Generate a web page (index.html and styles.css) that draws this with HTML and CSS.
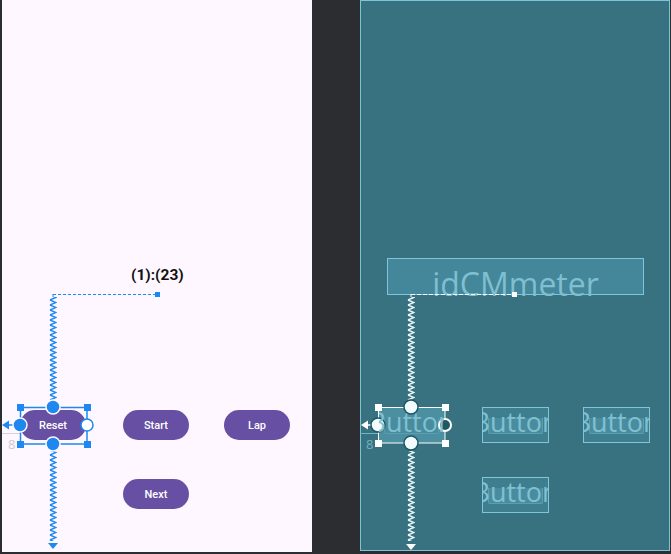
FILE: index.html
```html
<!DOCTYPE html>
<html lang="en">
    <head>
        <title>Layout Editor - Design and Blueprint</title>
        <link rel="stylesheet" href="styles.css">
    </head>
    <body>
        <div class="editor">
            <!-- design surface -->
            <div class="surface design">
                <div class="label">(1):(23)</div>
                <div class="btn reset">Reset</div>
                <div class="btn start">Start</div>
                <div class="btn lap">Lap</div>
                <div class="btn next">Next</div>
                <div class="margin-num">8</div>
                <svg class="overlay" width="310" height="552">
                    <defs>
                        <pattern id="zzBlue" x="47" y="0" width="8" height="5" patternUnits="userSpaceOnUse">
                            <path d="M1 0 L7 2.5 L1 5" stroke="#1e88f0" stroke-width="1.4" fill="none"/>
                        </pattern>
                    </defs>
                    <line x1="51" y1="294.5" x2="155" y2="294.5" stroke="#1e88f0" stroke-width="1.2" stroke-dasharray="3 2"/>
                    <line x1="51" y1="294" x2="51" y2="297" stroke="#1e88f0"/>
                    <rect x="153" y="292" width="5" height="5" fill="#1e88f0"/>
                    <rect x="47" y="297" width="8" height="104" fill="url(#zzBlue)"/>
                    <rect x="47" y="451" width="8" height="90" fill="url(#zzBlue)"/>
                    <path d="M46 543 L56 543 L51 549 Z" fill="#1e88f0"/>
                    <line x1="0" y1="433.5" x2="18" y2="433.5" stroke="#d6d2d8"/>
                    <line x1="3" y1="425" x2="18" y2="425" stroke="#1e88f0" stroke-width="1.5"/>
                    <path d="M0 425 L7 420.5 L7 429.5 Z" fill="#1e88f0"/>
                    <rect x="18.5" y="407.5" width="66.5" height="36.5" fill="none" stroke="#1e88f0" stroke-width="1.5"/>
                    <rect x="15" y="404" width="7" height="7" fill="#1e88f0"/>
                    <rect x="82" y="404" width="7" height="7" fill="#1e88f0"/>
                    <rect x="15" y="441" width="7" height="7" fill="#1e88f0"/>
                    <rect x="82" y="441" width="7" height="7" fill="#1e88f0"/>
                    <circle cx="51" cy="407" r="7" fill="#1e88f0" stroke="#fef7ff" stroke-width="1.5"/>
                    <circle cx="51" cy="444" r="7" fill="#1e88f0" stroke="#fef7ff" stroke-width="1.5"/>
                    <circle cx="18" cy="425" r="7" fill="#1e88f0" stroke="#fef7ff" stroke-width="1.5"/>
                    <circle cx="85" cy="425" r="6" fill="#ffffff" stroke="#1e88f0" stroke-width="1.5"/>
                </svg>
            </div>

            <!-- blueprint surface -->
            <div class="surface blueprint">
                <div class="bp-box bp-text">idCMmeter</div>
                <div class="bp-box bp-btn sel"><span>Button</span></div>
                <div class="bp-box bp-btn b2"><span>Button</span></div>
                <div class="bp-box bp-btn b3"><span>Button</span></div>
                <div class="bp-box bp-btn b4"><span>Button</span></div>
                <div class="margin-num bp-num">8</div>
                <svg class="overlay" width="310" height="552">
                    <defs>
                        <pattern id="zzWhite" x="47" y="0" width="8" height="5" patternUnits="userSpaceOnUse">
                            <path d="M1 0 L7 2.5 L1 5" stroke="#e8f6fa" stroke-width="1.4" fill="none"/>
                        </pattern>
                    </defs>
                    <line x1="51" y1="294.5" x2="154" y2="294.5" stroke="#ffffff" stroke-width="1.2" stroke-dasharray="4 2"/>
                    <line x1="51" y1="294" x2="51" y2="297" stroke="#ffffff"/>
                    <rect x="152" y="292" width="5" height="5" fill="#ffffff"/>
                    <rect x="47" y="297" width="8" height="104" fill="url(#zzWhite)"/>
                    <rect x="47" y="451" width="8" height="90" fill="url(#zzWhite)"/>
                    <path d="M46 544 L56 544 L51 550 Z" fill="#ffffff"/>
                    <line x1="0" y1="433.5" x2="18" y2="433.5" stroke="#6fb5c8"/>
                    <line x1="3" y1="425" x2="18" y2="425" stroke="#ffffff" stroke-width="1.5"/>
                    <path d="M1 425 L8 420.5 L8 429.5 Z" fill="#ffffff"/>
                    <rect x="18.5" y="407.5" width="66.5" height="35.5" fill="none" stroke="#ffffff" stroke-width="1"/>
                    <rect x="15" y="404" width="7" height="7" fill="#ffffff"/>
                    <rect x="82" y="404" width="7" height="7" fill="#ffffff"/>
                    <rect x="15" y="440" width="7" height="7" fill="#ffffff"/>
                    <rect x="82" y="440" width="7" height="7" fill="#ffffff"/>
                    <circle cx="51" cy="407" r="7" fill="#f2fbfd" stroke="#1f5765" stroke-width="1.5"/>
                    <circle cx="51" cy="443" r="7" fill="#f2fbfd" stroke="#1f5765" stroke-width="1.5"/>
                    <circle cx="18" cy="425" r="7" fill="#f2fbfd" stroke="#1f5765" stroke-width="1.5"/>
                    <circle cx="85" cy="425" r="7" fill="#ffffff"/>
                    <circle cx="85" cy="425" r="5" fill="#1f5765"/>
                </svg>
            </div>
        </div>
    </body>
</html>
```

FILE: styles.css
```css
body {
    margin: 0;
    background: #2b2d30; /* editor backdrop */
    font-family: Roboto, "Liberation Sans", sans-serif;
    overflow: hidden;
}
.editor {
    display: flex;
    gap: 48px;
    padding-left: 2px;
    height: 554px;
}
.surface {
    position: relative;
    width: 310px;
    height: 552px;
    flex: none;
}
.design {
    background: #fef7ff;
}
.blueprint {
    background: #38717f;
    box-shadow: inset 0 0 0 1px #7cc4d8;
    height: 551px;
}
.overlay {
    position: absolute;
    left: 0;
    top: 0;
}

/* design view widgets */
.label {
    position: absolute;
    left: 129px;
    top: 266px;
    font-size: 15.5px;
    font-weight: bold;
    color: #111;
}
.btn {
    position: absolute;
    width: 66px;
    height: 30px;
    border-radius: 15px;
    background: #6750a4;
    color: #fff;
    font-size: 11px;
    font-weight: 500;
    display: flex;
    align-items: center;
    justify-content: center;
}
.reset { left: 18px; top: 410px; }
.start { left: 121px; top: 410px; }
.lap   { left: 222px; top: 410px; }
.next  { left: 121px; top: 479px; }

.margin-num {
    position: absolute;
    left: 6px;
    top: 438px;
    font-size: 13px;
    line-height: 13px;
    color: #cdc9cf;
    font-family: "Open Sans", sans-serif;
}

/* blueprint widgets */
.bp-box {
    position: absolute;
    background: #44869a;
    border: 1px solid #7fc6da;
    box-sizing: border-box;
    color: #7fbfd0;
    font-family: "Open Sans", "DejaVu Sans", sans-serif;
}
.bp-text {
    left: 27px;
    top: 258px;
    width: 257px;
    height: 37px;
    font-size: 32px;
    line-height: 50px;
    text-align: center;
    overflow: visible;
    white-space: nowrap;
}
.bp-btn {
    width: 67px;
    height: 36px;
    top: 407px;
    background: #3f7e8f;
    overflow: hidden;
    display: flex;
    align-items: flex-start;
    justify-content: center;
}
.bp-btn::after {
    content: "";
    position: absolute;
    left: 5px;
    right: 5px;
    top: 10px;
    bottom: 8px;
    border: 1px solid #5a9fb1;
    border-top: none;
    border-radius: 0 0 2px 2px;
    background: #4a8c9f;
}
.bp-btn span {
    position: relative;
    z-index: 1;
    font-size: 27px;
    line-height: 28px;
    white-space: nowrap;
    color: #80c0d1;
}
.bp-btn.sel {
    left: 18px;
    background: #4b8fa1;
    border-color: transparent;
}
.b2 { left: 122px; }
.b3 { left: 223px; }
.b4 { left: 122px; top: 477px; }

.bp-num {
    left: 6px;
    color: #6fb0c2;
}
```
